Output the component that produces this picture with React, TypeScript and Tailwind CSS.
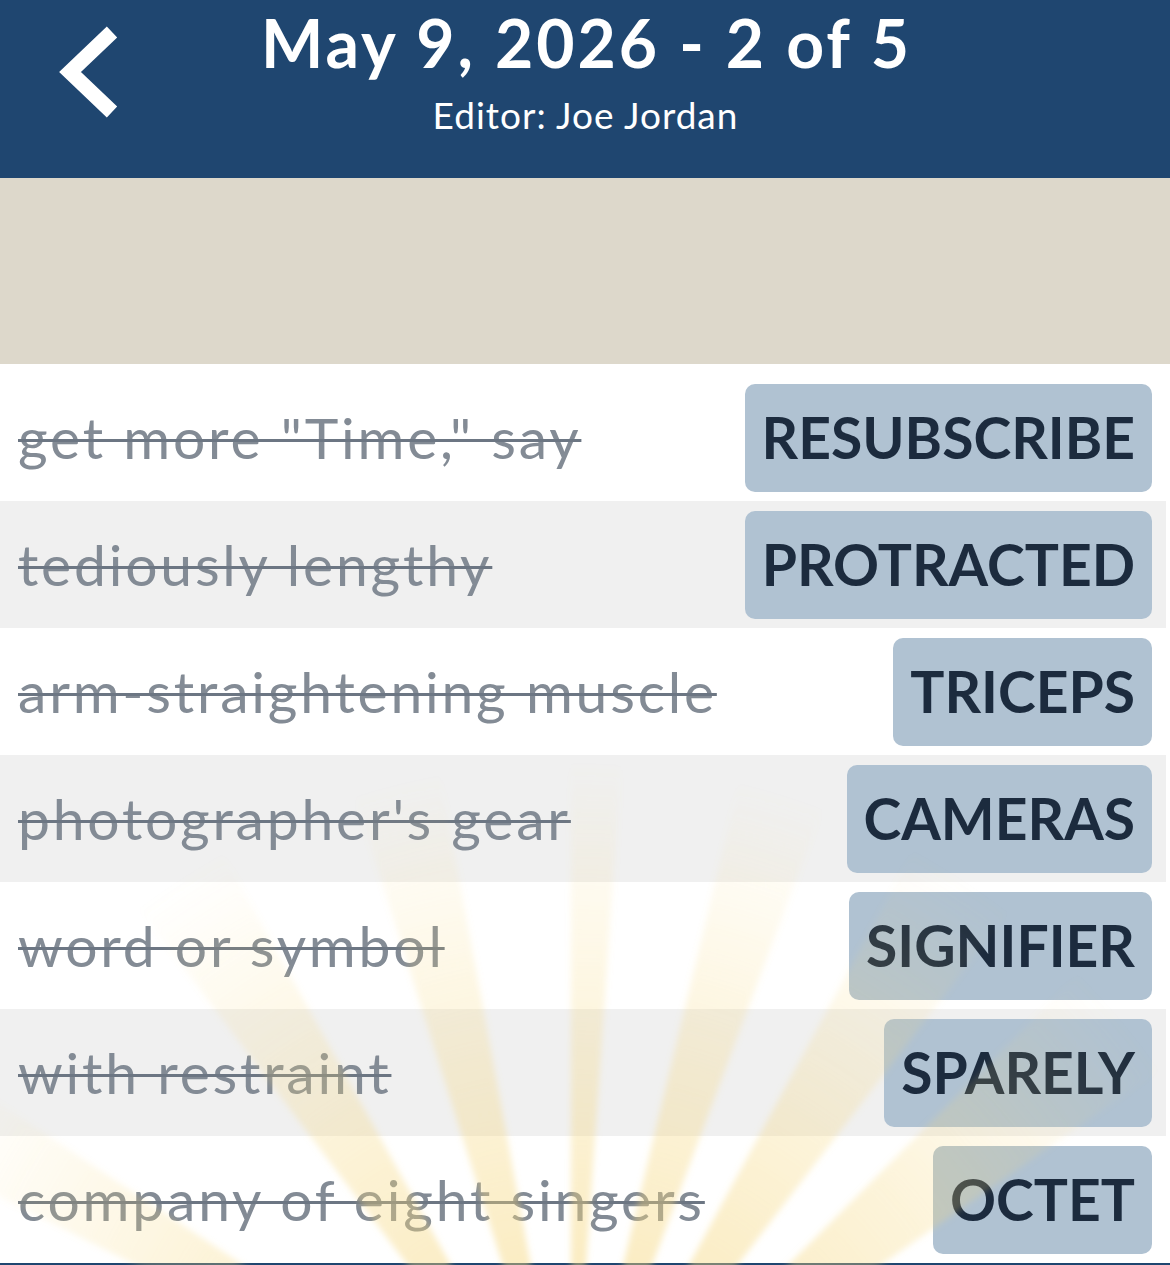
import React from "react";

type Entry = { clue: string; answer: string };

const entries: Entry[] = [
  { clue: 'get more "Time," say', answer: "RESUBSCRIBE" },
  { clue: "tediously lengthy", answer: "PROTRACTED" },
  { clue: "arm-straightening muscle", answer: "TRICEPS" },
  { clue: "photographer's gear", answer: "CAMERAS" },
  { clue: "word or symbol", answer: "SIGNIFIER" },
  { clue: "with restraint", answer: "SPARELY" },
  { clue: "company of eight singers", answer: "OCTET" },
];

const font = { fontFamily: "Lato, 'Noto Sans', sans-serif" };

// Faint sunburst rising from below the bottom edge
function Sunburst() {
  const ox = 571;
  const oy = 1482;
  const rays: [number, number][] = [
    [-60, 7],
    [-33, 8],
    [-14, 7],
    [2, 4],
    [17, 7],
    [33, 9],
    [50, 10],
  ];
  const len = 900;
  const polys = rays.map(([a, w]) => {
    const r1 = ((a - w / 2) * Math.PI) / 180;
    const r2 = ((a + w / 2) * Math.PI) / 180;
    const p1 = `${ox + Math.sin(r1) * len},${oy - Math.cos(r1) * len}`;
    const p2 = `${ox + Math.sin(r2) * len},${oy - Math.cos(r2) * len}`;
    return `${ox},${oy} ${p1} ${p2}`;
  });
  return (
    <svg
      className="pointer-events-none absolute left-0 top-0"
      width={1170}
      height={1265}
      viewBox="0 0 1170 1265"
    >
      <defs>
        <radialGradient id="rayFade" cx={ox} cy={oy} r={720} gradientUnits="userSpaceOnUse">
          <stop offset="0.3" stopColor="#f6d77c" stopOpacity="0.46" />
          <stop offset="0.6" stopColor="#f6d77c" stopOpacity="0.28" />
          <stop offset="1" stopColor="#f6d77c" stopOpacity="0" />
        </radialGradient>
        <filter id="raySoft" x="-10%" y="-10%" width="120%" height="120%">
          <feGaussianBlur stdDeviation="3" />
        </filter>
      </defs>
      <g filter="url(#raySoft)">
        {polys.map((pts, i) => (
          <polygon key={i} points={pts} fill="url(#rayFade)" />
        ))}
      </g>
    </svg>
  );
}

export default function App() {
  return (
    <div className="relative h-[1265px] w-[1170px] overflow-hidden bg-white" style={font}>
      <header className="grid h-[178px] grid-cols-[1fr_auto_1fr] bg-[#1f4670] text-white">
        <div className="flex items-start pl-[52px] pt-[24px]">
          <svg width="80" height="100" viewBox="0 0 80 100">
            <polyline
              points="60,8 18,48 60,88"
              fill="none"
              stroke="white"
              strokeWidth="15"
              strokeLinejoin="miter"
              strokeLinecap="butt"
            />
          </svg>
        </div>
        <div className="flex flex-col items-center pt-[4px]">
          <div className="pl-[3px] text-[66px] font-bold leading-[78px] tracking-[3px]">
            May 9, 2026 - 2 of 5
          </div>
          <div className="mt-[11px] pl-[1px] text-[37px] leading-[44px] tracking-[1px]">
            Editor: Joe Jordan
          </div>
        </div>
        <div />
      </header>

      <div className="h-[186px] bg-[#ddd8cb]" />

      <ul className="pt-[10px]">
        {entries.map((e, i) => (
          <li
            key={e.answer}
            className={
              "mr-[4px] flex h-[127px] items-center justify-between pl-[18px] pr-[14px] " +
              (i % 2 === 1 ? "bg-[#f0f0f0]" : "bg-white")
            }
          >
            <span className="text-[57px] leading-none tracking-[2.8px] text-[#838b95] line-through decoration-[#6c7683] decoration-[3px]">
              {e.clue}
            </span>
            <span className="flex h-[108px] items-center rounded-[10px] bg-[#b0c2d2] px-[17px] text-[57px] font-bold leading-none text-[#1c2b3e]">
              {e.answer}
            </span>
          </li>
        ))}
      </ul>
      <div className="h-[3px] bg-[#1f4670]" />

      <Sunburst />
    </div>
  );
}
